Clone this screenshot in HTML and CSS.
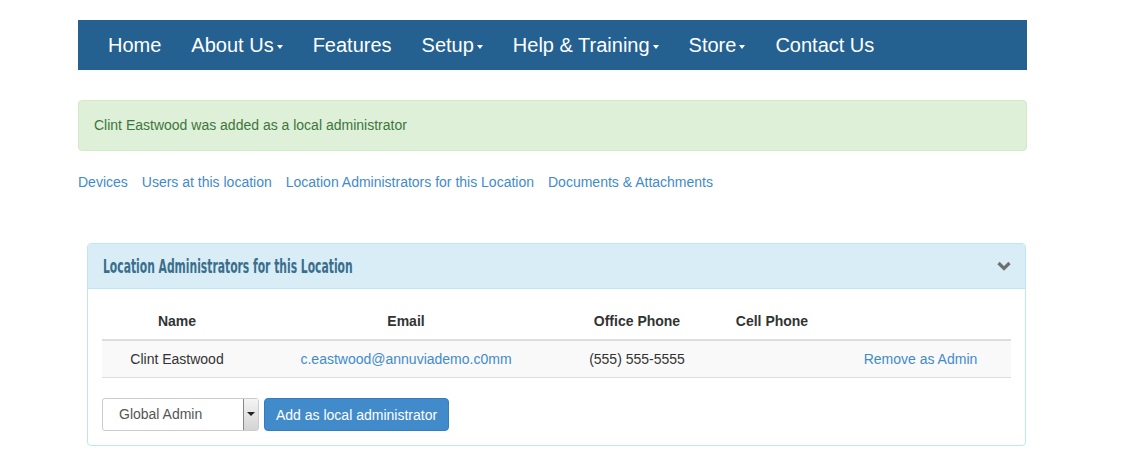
FILE: index.html
```html
<!DOCTYPE html>
<html lang="en">
<head>
    <meta charset="UTF-8"/>
    <title>Location Administrators</title>
    <link rel="stylesheet" href="styles.css">
</head>
<body>
<div class="page">
    <nav class="navbar">
        <a href="#">Home</a>
        <a href="#">About Us<span class="caret"></span></a>
        <a href="#">Features</a>
        <a href="#">Setup<span class="caret"></span></a>
        <a href="#">Help &amp; Training<span class="caret"></span></a>
        <a href="#">Store<span class="caret"></span></a>
        <a href="#">Contact Us</a>
    </nav>

    <div class="alert-success">Clint Eastwood was added as a local administrator</div>

    <div class="sub-links">
        <a href="#">Devices</a>
        <a href="#">Users at this location</a>
        <a href="#">Location Administrators for this Location</a>
        <a href="#">Documents &amp; Attachments</a>
    </div>

    <div class="panel">
        <div class="panel-heading">
            <h3><span class="heading-text">Location Administrators for this Location</span></h3>
            <svg class="chevron" width="14" height="10" viewBox="0 0 14 10">
                <path d="M1.5 2 L7 7.5 L12.5 2" fill="none" stroke="#6f6f6f" stroke-width="3.2"/>
            </svg>
        </div>
        <div class="panel-body">
            <table class="admin-table">
                <thead>
                <tr>
                    <th class="col-name">Name</th>
                    <th class="col-email">Email</th>
                    <th class="col-office">Office Phone</th>
                    <th class="col-cell">Cell Phone</th>
                    <th class="col-action"></th>
                </tr>
                </thead>
                <tbody>
                <tr>
                    <td>Clint Eastwood</td>
                    <td><a href="#">c.eastwood@annuviademo.c0mm</a></td>
                    <td>(555) 555-5555</td>
                    <td></td>
                    <td><a href="#">Remove as Admin</a></td>
                </tr>
                </tbody>
            </table>
            <div class="add-row">
                <div class="fake-select">
                    <span class="select-text">Global Admin</span>
                    <span class="select-arrow"></span>
                </div>
                <button type="button" class="btn-primary">Add as local administrator</button>
            </div>
        </div>
    </div>
</div>
</body>
</html>
```

FILE: styles.css
```css
/* 页面基础 */
body {
    margin: 0;
    font-family: "Liberation Sans", Arial, sans-serif;
    font-size: 14px;
    color: #333;
    background: #fff;
}

a {
    color: #428bca;
    text-decoration: none;
}

.page {
    width: 949px;
    margin: 20px 0 0 78px;
}

/* 顶部导航 */
.navbar {
    display: flex;
    height: 50px;
    align-items: center;
    padding: 0 15px;
    background-color: #246190;
}

.navbar a {
    color: #fff;
    font-size: 20px;
    padding: 0 15px;
    line-height: 50px;
}

.caret {
    display: inline-block;
    width: 0;
    height: 0;
    margin-left: 3px;
    vertical-align: middle;
    border-top: 4px solid #fff;
    border-left: 3px solid transparent;
    border-right: 3px solid transparent;
}

/* 提示信息 */
.alert-success {
    margin-top: 30px;
    padding: 15px;
    height: 19px;
    line-height: 19px;
    background-color: #dff0d8;
    border: 1px solid #d6e9c6;
    border-radius: 4px;
    color: #3c763d;
}

.sub-links {
    display: flex;
    gap: 14px;
    margin-top: 22px;
    line-height: 18px;
}

/* 面板 */
.panel {
    margin: 52px 0 0 9px;
    width: 937px;
    border: 1px solid #bce8f1;
    border-radius: 4px;
}

.panel-heading {
    display: flex;
    justify-content: space-between;
    align-items: center;
    height: 44px;
    padding: 0 15px;
    background-color: #d9edf7;
    border-bottom: 1px solid #bce8f1;
    border-radius: 3px 3px 0 0;
}

.panel-heading h3 {
    margin: 0;
    font-family: "DejaVu Sans Condensed", "DejaVu Sans", sans-serif;
    font-size: 19px;
    font-weight: bold;
    color: #3a6f8c;
}

/* 标题字体较窄，横向压缩 */
.heading-text {
    display: inline-block;
    transform: scaleX(0.63);
    transform-origin: left center;
}

.chevron {
    margin-right: -1px;
}

.panel-body {
    padding: 14px 14px 14px 14px;
}

/* 表格 */
.admin-table {
    width: 909px;
    border-collapse: collapse;
    margin-bottom: 20px;
}

.admin-table th,
.admin-table td {
    padding: 8px;
    line-height: 20px;
    text-align: center;
}

.admin-table th {
    font-weight: bold;
    border-bottom: 2px solid #ddd;
}

.admin-table td {
    background-color: #f9f9f9;
    border-bottom: 1px solid #ddd;
}

.col-name { width: 134px; }
.col-email { width: 292px; }
.col-office { width: 138px; }
.col-cell { width: 100px; }

/* 添加管理员 */
.add-row {
    display: flex;
    gap: 5px;
}

.fake-select {
    display: flex;
    width: 155px;
    height: 31px;
    border: 1px solid #ccc;
    border-radius: 3px;
    background: #fff;
}

.select-text {
    flex: 1;
    padding-left: 16px;
    line-height: 31px;
    color: #555;
}

.select-arrow {
    position: relative;
    width: 14px;
    border-left: 1px solid #888;
    background: linear-gradient(#f4f4f4, #d4d4d4);
}

.select-arrow::after {
    content: "";
    position: absolute;
    left: 3px;
    top: 13px;
    border-top: 4px solid #222;
    border-left: 4px solid transparent;
    border-right: 4px solid transparent;
}

.btn-primary {
    height: 33px;
    padding: 0 11px;
    font-family: "Liberation Sans", Arial, sans-serif;
    font-size: 14px;
    color: #fff;
    background-color: #428bca;
    border: 1px solid #357ebd;
    border-radius: 4px;
}
```
